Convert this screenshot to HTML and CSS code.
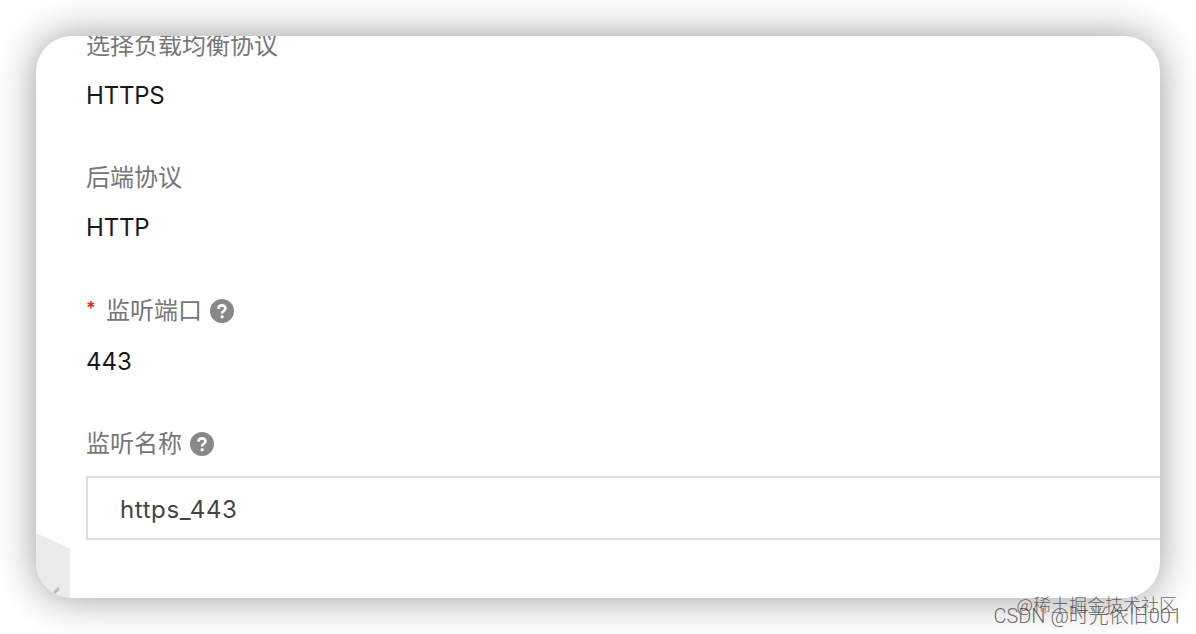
FILE: index.html
```
<!DOCTYPE html>
<html lang="zh-CN">
<head>
    <meta charset="UTF-8">
    <meta name="viewport" content="width=device-width, initial-scale=1.0">
    <title>监听配置</title>
    <link rel="stylesheet" href="styles.css">
</head>
<body>
    <div class="card">
        <div class="field">
            <div class="label">选择负载均衡协议</div>
            <div class="value">HTTPS</div>
        </div>

        <div class="field">
            <div class="label">后端协议</div>
            <div class="value">HTTP</div>
        </div>

        <div class="field field-port">
            <div class="label">
                <span class="required">*</span>监听端口
                <svg class="help" viewBox="0 0 24 24">
                    <circle cx="12" cy="12" r="12"/>
                    <path d="M8.5 9.7C8.5 5.3 15.5 5.4 15.5 9.3C15.5 11.8 12.1 11.6 12.1 14.4"/>
                    <rect x="10.7" y="16.4" width="2.8" height="2.8"/>
                </svg>
            </div>
            <div class="value">443</div>
        </div>

        <div class="field">
            <div class="label">
                监听名称
                <svg class="help" viewBox="0 0 24 24">
                    <circle cx="12" cy="12" r="12"/>
                    <path d="M8.5 9.7C8.5 5.3 15.5 5.4 15.5 9.3C15.5 11.8 12.1 11.6 12.1 14.4"/>
                    <rect x="10.7" y="16.4" width="2.8" height="2.8"/>
                </svg>
            </div>
            <div class="input">https_443</div>
        </div>

        <!-- collapsed side panel handle -->
        <svg class="handle" viewBox="0 0 34 65">
            <path class="handle-bg" d="M0 0L34 15.5V65H0Z"/>
            <path class="handle-arrow" d="M23 55L18 60"/>
        </svg>
    </div>

    <div class="watermark watermark-top">@稀土掘金技术社区</div>
    <div class="watermark watermark-bottom">CSDN @时光依旧001</div>
</body>
</html>
```
FILE: styles.css
```
body {
    margin: 0;
    height: 634px;
    padding: 36px;
    box-sizing: border-box;
    position: relative;
    overflow: hidden;
    background-color: #fff;
    font-family: Inter, "Noto Sans CJK SC", sans-serif;
}

.card {
    position: relative;
    height: 562px;
    padding-left: 50px;
    box-sizing: border-box;
    overflow: hidden;
    border-radius: 36px;
    background-color: #fff;
    box-shadow: 0 0 40px rgba(0, 0, 0, 0.4);
}

.field {
    height: 133px;
}

/* the form is scrolled, so the first label is cut by the card */
.field:first-child {
    height: 132px;
    margin-top: -6px;
}

.label {
    display: flex;
    align-items: center;
    height: 32px;
    font-size: 24px;
    line-height: 32px;
    color: #777;
}

.required {
    width: 20px;
    height: 32px;
    font-size: 18px;
    font-weight: 600;
    line-height: 28px;
    color: #d93026;
}

.help {
    width: 24px;
    height: 24px;
    margin-left: 8px;
    fill: #888;
}

.help path {
    fill: none;
    stroke: #fff;
    stroke-width: 2.6;
}

.help rect {
    fill: #fff;
}

.value {
    margin-top: 18px;
    font-size: 24px;
    line-height: 32px;
    letter-spacing: -0.2px;
    color: #181818;
}

.field-port .value {
    margin-top: 19px;
    letter-spacing: 0;
}

.input {
    height: 64px;
    margin-top: 16px;
    padding-left: 32px;
    box-sizing: border-box;
    border: 2px solid #dedede;
    border-right: 0;
    font-size: 24px;
    line-height: 64px;
    letter-spacing: 0.6px;
    color: #444;
}

.handle {
    position: absolute;
    left: 0;
    bottom: 0;
    width: 34px;
    height: 65px;
}

.handle-bg {
    fill: #ebebeb;
}

.handle-arrow {
    stroke: #bbb;
    stroke-width: 3;
}

.watermark {
    position: absolute;
    font-family: "Noto Sans CJK SC", sans-serif;
    font-weight: 300;
    line-height: 24px;
    white-space: nowrap;
    color: rgba(70, 70, 70, 0.8);
}

.watermark-top {
    right: 19px;
    top: 592px;
    font-size: 18px;
}

.watermark-bottom {
    right: 14px;
    top: 604px;
    font-family: Roboto, "Noto Sans CJK SC", sans-serif;
    font-size: 20px;
}
```
